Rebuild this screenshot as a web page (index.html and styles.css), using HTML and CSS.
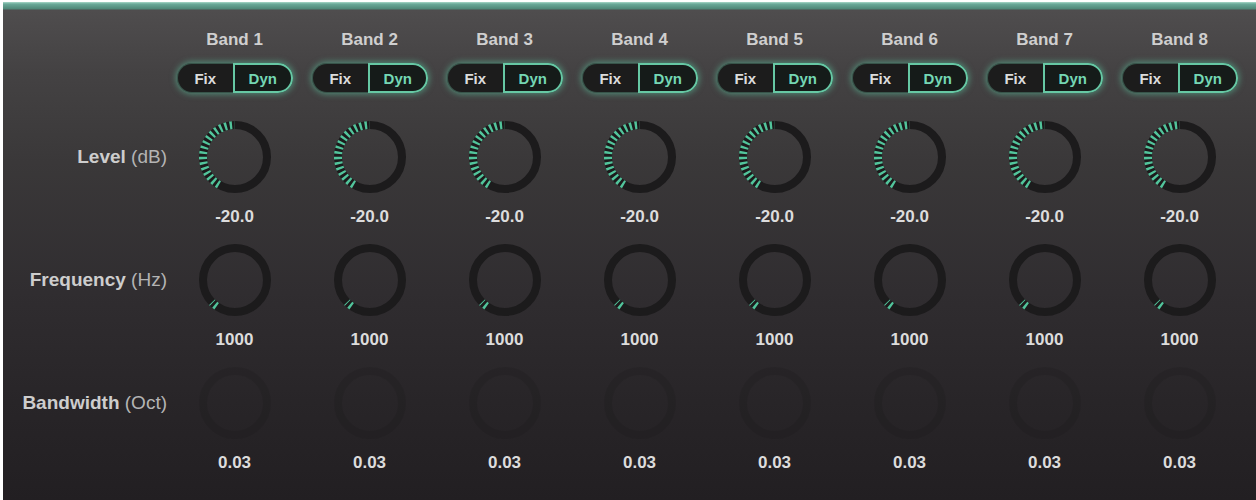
FILE: index.html
```html
<!DOCTYPE html>
<html lang="en">
<head>
    <meta charset="UTF-8">
    <meta name="viewport" content="width=device-width, initial-scale=1.0">
    <title>Dynamic EQ</title>
    <link rel="stylesheet" href="styles.css">
</head>
<body>
<div class="panel">
    <div class="grid" id="grid"></div>
</div>

<script>
    const rows = [
        { name: 'Level', unit: '(dB)', value: '-20.0', arc: [-150, 0], cls: '' },
        { name: 'Frequency', unit: '(Hz)', value: '1000', arc: [-145, -134], cls: '' },
        { name: 'Bandwidth', unit: '(Oct)', value: '0.03', arc: null, cls: 'off' }
    ];

    function pt(a) {
        const r = a * Math.PI / 180;
        return (38 + 32 * Math.sin(r)).toFixed(2) + ' ' + (38 - 32 * Math.cos(r)).toFixed(2);
    }

    function knob(row) {
        let arc = '';
        if (row.arc) {
            const big = row.arc[1] - row.arc[0] > 180 ? 1 : 0;
            arc = `<path class="arc" d="M ${pt(row.arc[0])} A 32 32 0 ${big} 1 ${pt(row.arc[1])}"/>`;
        }
        return `
            <div class="knob ${row.cls}">
                <svg width="76" height="76" viewBox="0 0 76 76">
                    <circle class="ring" cx="38" cy="38" r="32"/>
                    ${arc}
                </svg>
                <div class="value">${row.value}</div>
            </div>`;
    }

    let html = '<div></div>';
    for (let b = 1; b <= 8; b++) {
        html += `
            <div class="band">
                <div class="band-name">Band ${b}</div>
                <div class="toggle">
                    <span class="fix">Fix</span>
                    <span class="dyn">Dyn</span>
                </div>
            </div>`;
    }
    rows.forEach(row => {
        html += `<div class="row-label"><b>${row.name}</b>&nbsp;<span>${row.unit}</span></div>`;
        for (let b = 1; b <= 8; b++) html += knob(row);
    });
    document.getElementById('grid').innerHTML = html;
</script>
</body>
</html>
```

FILE: styles.css
```css
body {
    margin: 0;
    background-color: #fff;
    font-family: 'Liberation Sans', Arial, sans-serif;
}
.panel {
    margin: 2px 0 0 3px;
    height: 498px;
    box-sizing: border-box;
    padding-top: 28px;
    background: linear-gradient(#a9d8c9 0, #6aa999 2px, #4f8677 7px, #4f4d4e 8px, #444243 70px, #3a3839 160px, #302d30 290px, #282528 400px, #221f22 498px);
}
.grid {
    display: grid;
    grid-template-columns: 164px repeat(8, 135px);
    row-gap: 15px;
}
.band {
    display: flex;
    flex-direction: column;
    align-items: center;
    margin-bottom: 11px;
}
.band-name {
    font-weight: bold;
    font-size: 17px;
    line-height: 20px;
    color: #cfcfcf;
}
.toggle {
    display: flex;
    margin-top: 13px;
    height: 30px;
    width: 116px;
    border-radius: 16px;
    background-color: #1c1c1c;
    box-shadow: 0 0 6px 1px rgba(95, 205, 165, 0.55);
    font-weight: bold;
    font-size: 15px;
}
.toggle span {
    flex: 1;
    display: flex;
    align-items: center;
    justify-content: center;
    box-sizing: border-box;
}
.fix {
    color: #dcdcdc;
    border-radius: 16px 0 0 16px;
    border: 1px solid rgba(110, 190, 160, 0.35);
    border-right: none;
}
.dyn {
    color: #74d7b4;
    background-color: #151b19;
    border: 2px solid #66c8a4;
    border-radius: 0 16px 16px 0;
}
.row-label {
    height: 76px;
    display: flex;
    align-items: center;
    justify-content: flex-end;
    font-size: 19px;
    color: #cdcdcd;
}
.row-label span {
    color: #b4b4b4;
}
.knob {
    display: flex;
    flex-direction: column;
    align-items: center;
}
.knob svg {
    filter: blur(0.6px);
}
.ring {
    fill: none;
    stroke: #1c1b1c;
    stroke-width: 8;
}
.arc {
    fill: none;
    stroke: #52c49b;
    stroke-width: 8;
    stroke-dasharray: 2.4 2.8;
}
.off .ring {
    stroke: rgba(0, 0, 0, 0.08);
}
.value {
    margin-top: 12px;
    font-weight: bold;
    font-size: 17px;
    line-height: 20px;
    color: #dcdcdc;
}
```
